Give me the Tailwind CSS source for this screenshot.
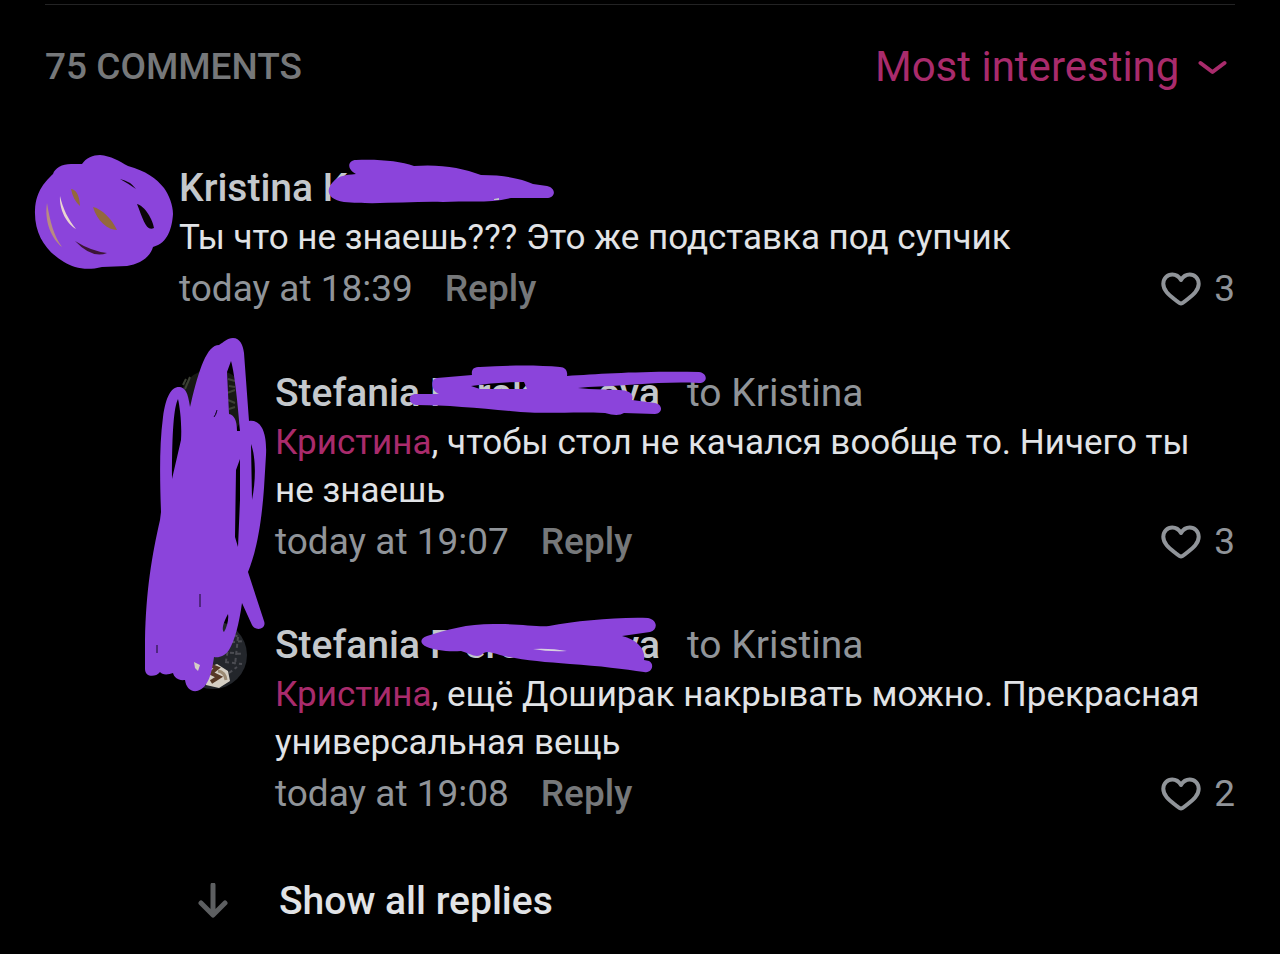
<!DOCTYPE html>
<html lang="en">
<head>
<meta charset="utf-8">
<meta name="viewport" content="width=device-width, initial-scale=1">
<title>Comments</title>
<script src="https://cdn.jsdelivr.net/npm/@tailwindcss/browser@4"></script>
</head>
<body class="min-h-screen bg-black font-['Roboto','Noto_Sans',sans-serif] text-[#e1e3e6]">
<svg class="hidden" aria-hidden="true">
  <symbol id="heart" viewBox="0 0 40 34"><path d="M20 31.500C18.500 31.500 17 30 14.500 28 8 22.800 2.300 18.500 2.300 11.800 2.300 6.500 6.300 2.500 11.300 2.500c3.700 0 6.700 2.100 8.700 5.500 2-3.400 5-5.500 8.700-5.500 5 0 9 4 9 9.300 0 6.700-5.700 11-12.200 16.200-2.500 2-4 3.500-5.500 3.500z" fill="none" stroke="currentColor" stroke-width="4" stroke-linejoin="round"/></symbol>
</svg>
<main class="px-[45px] pt-1">
  <header class="flex h-[124px] items-center justify-between border-t border-[#232324]">
    <h1 class="text-[37px] leading-[48px] font-medium text-[#76787a]">75 COMMENTS</h1>
    <div class="flex items-center gap-[18px] pr-2 text-[#a92b6c]">
      <select aria-label="Sort comments" class="h-14 appearance-none bg-transparent text-[42px] leading-[56px]">
        <option>Most interesting</option>
      </select>
      <svg class="h-4 w-[29px]" viewBox="0 0 29 16" fill="none" stroke="currentColor" stroke-width="4" stroke-linecap="round" stroke-linejoin="round" aria-hidden="true"><path d="M2.500 4 14.500 13 26.500 4"/></svg>
    </div>
  </header>

  <article class="relative mt-9 grid grid-cols-[134px_1fr]">
    <div></div>
    <div>
      <h2 class="mb-0.5 text-[39px] leading-[48px] font-medium text-[#c4c8cc]">Kristina K</h2>
      <p class="text-[35px] leading-[48px]">Ты что не знаешь??? Это же подставка под супчик</p>
      <div class="flex text-[37px] leading-[54px] text-[#909499]">
        <time>today at 18:39</time>
        <button class="ml-8 font-medium text-[#76787a]">Reply</button>
        <button class="ml-auto flex items-center gap-[13px]" aria-label="Like, 3"><svg class="h-[34px] w-10"><use href="#heart"/></svg>3</button>
      </div>
    </div>
    <svg class="absolute -top-[14px] -left-[15px] h-[130px] w-[530px]" viewBox="30 150 530 130" aria-hidden="true">
      <path fill="#8b44db" d="M35 210C36 190 46 181 53 174 55 168 62 164 71 164H82C86 158 93 155 100 155 111 156 119 161 128 166 146 171 156 178 164 188 169 195 173 205 173 214 172 228 168 243 153 247 150 258 139 264 127 266L102 267C86 271 74 268 64 262 47 252 34 235 35 210z"/>
      <path fill="#b98b80" d="M47 203C50 222 54 236 62 247 52 239 44 222 47 203z"/>
      <path fill="#ead5d0" d="M60 196C63 209 68 219 76 229 67 224 59 210 60 196z"/>
      <path fill="#94683c" d="M71 189Q79 190 80 206 73 200 71 189zM93 207C102 209 112 219 117 230 108 230 97 221 93 207z"/>
      <path fill="#0b0508" d="M120 179Q130 181 136 189 129 184 120 179zM137 204C145 206 153 220 154 228 146 232 143 219 137 204z"/>
      <path fill="#3c1636" d="M75 241Q91 251 107 253 92 259 75 241z"/>
      <path fill="#8b44db" d="M335 180C340 176 344 175 356 174 346 169 348 160 356 160 379 159 400 161 414 166 441 164 462 168 481 175 506 175 522 179 533 184L547 186C556 188 556 197 548 198L511 198C487 204 463 200 443 202 413 201 376 205 344 202 326 199 325 189 335 180z"/>
      <path fill="#c4c8cc" d="M494 199l5-1v2h-5z"/>
    </svg>
  </article>

  <section class="relative mt-[53px] pl-[134px]" aria-label="Replies">
    <div class="flex flex-col gap-[52px]">
      <article class="grid grid-cols-[96px_1fr]">
        <svg class="h-[68px] w-[68px]" viewBox="0 0 68 68" aria-hidden="true"><circle cx="34" cy="34" r="34" fill="#171914"/><path d="M4 16l3-6M6 20l5-12M49 10l7 2M50 17l6 1M48 24l8-3M49 31l7 3M50 40l6-2" fill="none" stroke="#3c4034" stroke-width="2"/></svg>
        <div class="relative">
          <h2 class="mb-0.5 flex text-[39px] leading-[48px] font-medium text-[#c4c8cc]"><span>Stefania</span><span class="flex w-[240px] pl-[10px]"><span>P</span><span class="ml-[22px]">rok</span><span class="ml-auto">ova</span></span><span class="ml-[27px] font-normal text-[#909499]">to Kristina</span></h2>
          <p class="text-[35px] leading-[48px]"><a href="#kristina" class="text-[#a92b6c]">Кристина</a>, чтобы стол не качался вообще то. Ничего ты не знаешь</p>
          <div class="flex text-[37px] leading-[54px] text-[#909499]">
            <time>today at 19:07</time>
            <button class="ml-8 font-medium text-[#76787a]">Reply</button>
            <button class="ml-auto flex items-center gap-[13px]" aria-label="Like, 3"><svg class="h-[34px] w-10"><use href="#heart"/></svg>3</button>
          </div>
          <svg class="absolute -top-[9px] left-[125px] h-[60px] w-[320px]" viewBox="400 360 320 60" aria-hidden="true">
            <path fill="#8b44db" fill-rule="evenodd" d="M437 378 472 375C471 369 474 367 480 367 510 365 539 365 560 367 565 367 568 371 567 376 600 374 640 371 699 372 708 373 708 383 699 383 663 381 625 386 588 387L578 388 589 389 619 390C629 390 634 394 632 400L655 403C664 405 662 414 655 414L624 413Q618 417 605 413C568 411 550 415 510 411 478 408 445 405 416 405 407 403 408 394 416 394L439 394C431 391 430 379 437 378zM471 386 480 389H527L524 382Q498 382 471 386z"/>
          </svg>
        </div>
      </article>

      <article class="grid grid-cols-[96px_1fr]">
        <svg class="h-[68px] w-[68px]" viewBox="0 0 68 68" aria-hidden="true"><circle cx="34" cy="34" r="34" fill="#23262b"/><path d="M48 12l13 4M45 22l20-2M44 31l20 2M46 41l17 2M50 52l8-6M52 10l-5 30M59 16l-3 28" stroke="#4b4c52" stroke-width="2" stroke-dasharray="4 3"/><path d="M15 50 20 47 25 53 24 66 16 60zM28 47 38 43 49 50 51 60 40 67 27 64z" fill="#d5cfc4"/><path d="M28 43 38 47 32 52 40 56 32 61" fill="none" stroke="#573926" stroke-width="4"/><path d="M39 50q7 1 8 9" fill="none" stroke="#9b8a73" stroke-width="3"/></svg>
        <div class="relative">
          <h2 class="mb-0.5 flex text-[39px] leading-[48px] font-medium text-[#c4c8cc]"><span>Stefania</span><span class="flex w-[240px] justify-between pl-[10px]"><span>P ero</span><span>va</span></span><span class="ml-[27px] font-normal text-[#909499]">to Kristina</span></h2>
          <p class="text-[35px] leading-[48px]"><a href="#kristina" class="text-[#a92b6c]">Кристина</a>, ещё Доширак накрывать можно. Прекрасная универсальная вещь</p>
          <div class="flex text-[37px] leading-[54px] text-[#909499]">
            <time>today at 19:08</time>
            <button class="ml-8 font-medium text-[#76787a]">Reply</button>
            <button class="ml-auto flex items-center gap-[13px]" aria-label="Like, 2"><svg class="h-[34px] w-10"><use href="#heart"/></svg>2</button>
          </div>
          <svg class="absolute -top-[11px] left-[140px] h-[70px] w-[250px]" viewBox="415 610 250 70" aria-hidden="true">
            <path fill="#8b44db" d="M427 636C448 629 470 623 500 624 520 624 538 627 549 626 577 621 615 617 648 618 658 620 658 630 650 632L622 636C638 640 646 650 644 660L649 661C655 664 652 674 644 672 624 669 600 666 570 664 543 662 520 660 500 655 490 652 486 650 481 655 475 658 469 653 461 651 447 652 435 650 427 647 419 644 420 638 427 636z"/>
            <path fill="#d8d0df" d="M533 649q17-1 34 2-18 1-34-2z"/>
          </svg>
        </div>
      </article>
    </div>

    <svg class="absolute -top-[34px] left-[95px] h-[360px] w-[130px]" viewBox="140 335 130 360" aria-hidden="true">
      <path fill="#8b44db" fill-rule="evenodd" d="M191 403C199 369 207 345 219 345 224 342 227 338 233 338 240 338 243 345 244 353L249 421C263 419 267 436 266 455L264 488C261 530 255 555 248 572L264 621C267 629 256 632 252 625L242 603C239 624 235 640 229 650 225 656 219 658 214 657 212 671 209 688 197 691 190 692 186 687 185 680 178 681 174 677 173 673 168 675 162 675 160 672 155 678 145 677 145 669V640C146 590 152 555 160 520L161 512C160 482 159 447 163 417 166 395 172 386 180 387 185 388 188 392 190 407zM178 399C174 407 172 430 172 479L181 440C182 425 180 407 178 399zM231 361 227 372 229 414C234 415 237 420 237 431L240 431C238 407 235 375 231 361zM251 444 252 500C256 480 256 457 251 444zM240 459 236 470 235 537 238 547 240 500zM228 614C224 621 221 630 224 632 227 627 229 619 228 614z"/>
      <path d="M217 410q-1 5-3 7M200 594v13M157 645v8" stroke="#140924" stroke-width="1"/>
      <path d="M194 662 200 665 198 671 195 668z" fill="#d5cfc4"/>
    </svg>

    <button class="mt-14 flex items-center gap-[50px] pl-[18px] text-[39px] leading-[48px] font-medium">
      <svg class="h-9 w-8" viewBox="0 0 32 36" fill="none" stroke="#5d5f61" stroke-width="5" stroke-linecap="round" stroke-linejoin="round" aria-hidden="true"><path d="M16 2V31M4 20 16 32 28 20"/></svg>
      <span>Show all replies</span>
    </button>
  </section>
</main>
</body>
</html>
